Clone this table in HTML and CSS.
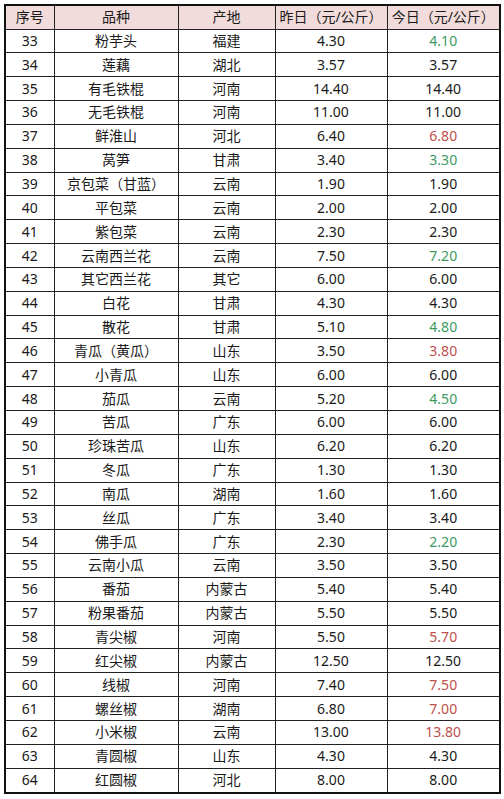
FILE: index.html
```html
<!DOCTYPE html>
<html lang="zh-CN">
<head>
<meta charset="utf-8">
<title>蔬菜价格表</title>
<link rel="stylesheet" href="styles.css">
</head>
<body>
<table class="price-table">
  <colgroup>
    <col class="c-no"><col class="c-name"><col class="c-origin"><col class="c-y"><col class="c-t">
  </colgroup>
  <thead>
    <tr><th>序号</th><th>品种</th><th>产地</th><th>昨日（元/公斤）</th><th>今日（元/公斤）</th></tr>
  </thead>
  <tbody>
    <tr><td>33</td><td>粉芋头</td><td>福建</td><td>4.30</td><td class="down">4.10</td></tr>
    <tr><td>34</td><td>莲藕</td><td>湖北</td><td>3.57</td><td>3.57</td></tr>
    <tr><td>35</td><td>有毛铁棍</td><td>河南</td><td>14.40</td><td>14.40</td></tr>
    <tr><td>36</td><td>无毛铁棍</td><td>河南</td><td>11.00</td><td>11.00</td></tr>
    <tr><td>37</td><td>鲜淮山</td><td>河北</td><td>6.40</td><td class="up">6.80</td></tr>
    <tr><td>38</td><td>莴笋</td><td>甘肃</td><td>3.40</td><td class="down">3.30</td></tr>
    <tr><td>39</td><td>京包菜（甘蓝）</td><td>云南</td><td>1.90</td><td>1.90</td></tr>
    <tr><td>40</td><td>平包菜</td><td>云南</td><td>2.00</td><td>2.00</td></tr>
    <tr><td>41</td><td>紫包菜</td><td>云南</td><td>2.30</td><td>2.30</td></tr>
    <tr><td>42</td><td>云南西兰花</td><td>云南</td><td>7.50</td><td class="down">7.20</td></tr>
    <tr><td>43</td><td>其它西兰花</td><td>其它</td><td>6.00</td><td>6.00</td></tr>
    <tr><td>44</td><td>白花</td><td>甘肃</td><td>4.30</td><td>4.30</td></tr>
    <tr><td>45</td><td>散花</td><td>甘肃</td><td>5.10</td><td class="down">4.80</td></tr>
    <tr><td>46</td><td>青瓜（黄瓜）</td><td>山东</td><td>3.50</td><td class="up">3.80</td></tr>
    <tr><td>47</td><td>小青瓜</td><td>山东</td><td>6.00</td><td>6.00</td></tr>
    <tr><td>48</td><td>茄瓜</td><td>云南</td><td>5.20</td><td class="down">4.50</td></tr>
    <tr><td>49</td><td>苦瓜</td><td>广东</td><td>6.00</td><td>6.00</td></tr>
    <tr><td>50</td><td>珍珠苦瓜</td><td>山东</td><td>6.20</td><td>6.20</td></tr>
    <tr><td>51</td><td>冬瓜</td><td>广东</td><td>1.30</td><td>1.30</td></tr>
    <tr><td>52</td><td>南瓜</td><td>湖南</td><td>1.60</td><td>1.60</td></tr>
    <tr><td>53</td><td>丝瓜</td><td>广东</td><td>3.40</td><td>3.40</td></tr>
    <tr><td>54</td><td>佛手瓜</td><td>广东</td><td>2.30</td><td class="down">2.20</td></tr>
    <tr><td>55</td><td>云南小瓜</td><td>云南</td><td>3.50</td><td>3.50</td></tr>
    <tr><td>56</td><td>番茄</td><td>内蒙古</td><td>5.40</td><td>5.40</td></tr>
    <tr><td>57</td><td>粉果番茄</td><td>内蒙古</td><td>5.50</td><td>5.50</td></tr>
    <tr><td>58</td><td>青尖椒</td><td>河南</td><td>5.50</td><td class="up">5.70</td></tr>
    <tr><td>59</td><td>红尖椒</td><td>内蒙古</td><td>12.50</td><td>12.50</td></tr>
    <tr><td>60</td><td>线椒</td><td>河南</td><td>7.40</td><td class="up">7.50</td></tr>
    <tr><td>61</td><td>螺丝椒</td><td>湖南</td><td>6.80</td><td class="up">7.00</td></tr>
    <tr><td>62</td><td>小米椒</td><td>云南</td><td>13.00</td><td class="up">13.80</td></tr>
    <tr><td>63</td><td>青圆椒</td><td>山东</td><td>4.30</td><td>4.30</td></tr>
    <tr><td>64</td><td>红圆椒</td><td>河北</td><td>8.00</td><td>8.00</td></tr>
  </tbody>
</table>
</body>
</html>
```

FILE: styles.css
```css
html, body {
  margin: 0;
  padding: 0;
  background: #ffffff;
}
body {
  padding: 4px 3px 0 4px;
  font-family: "Noto Sans", "Noto Sans CJK SC", sans-serif;
  color: #1a1a1a;
}
.price-table {
  border-collapse: collapse;
  table-layout: fixed;
  width: 497px;
  border: 2px solid #111111;
}
.c-no { width: 49px; }
.c-name { width: 124px; }
.c-origin { width: 97px; }
.c-y { width: 112px; }
.c-t { width: 113px; }
.price-table th,
.price-table td {
  height: 22.85px;
  padding: 0;
  border: 1px solid #222222;
  text-align: center;
  font-size: 14px;
  font-weight: normal;
  line-height: 22px;
  white-space: nowrap;
  overflow: hidden;
}
.price-table thead th {
  background: #f2dcdb;
  height: 22.5px;
}
.price-table td.down { color: #3d9a63; }
.price-table td.up { color: #c0504d; }
```
